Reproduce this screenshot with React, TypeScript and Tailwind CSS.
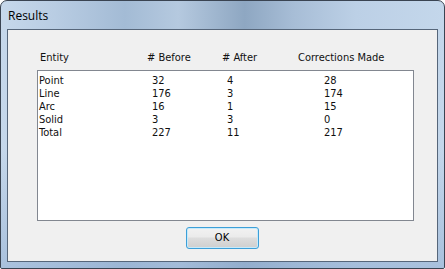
import React from "react";

const rows = [
  ["Point", "32", "4", "28"],
  ["Line", "176", "3", "174"],
  ["Arc", "16", "1", "15"],
  ["Solid", "3", "3", "0"],
  ["Total", "227", "11", "217"],
];

const font = { fontFamily: "'DejaVu Sans Condensed', 'DejaVu Sans', sans-serif", fontSize: "11px" };

export default function App() {
  return (
    <div className="w-[445px] h-[269px] bg-white">
      <div className="relative w-[445px] h-[269px] rounded-t-[7px] rounded-b-[2px] border border-[#3a4452] flex flex-col px-[6px] pb-[6px] bg-[linear-gradient(90deg,#c6d8eb_0%,#b9cde3_12%,#a3bbd5_28%,#b5c9df_40%,#8ea7c2_55%,#a7bdd6_66%,#bcd0e6_80%,#c4d7eb_100%)]">
        <div className="pointer-events-none absolute inset-x-0 bottom-0 h-[120px] bg-[linear-gradient(180deg,rgba(160,185,215,0)_0%,rgba(150,178,212,0.6)_100%)]" />
        <div
          className="relative h-[28px] flex items-center pl-[1px] pt-[1px] text-[12px] text-black"
          style={{ fontFamily: "'Segoe UI', 'Open Sans', sans-serif" }}
        >
          Results
        </div>
        <div className="relative flex-1 border border-[#56667a] bg-[#f0f0f0] flex flex-col text-[#101010]" style={font}>
          <div className="grid grid-cols-[107px_75px_76px_auto] pl-[32px] pt-[21px] h-[40px] leading-[13px]">
            <span>Entity</span>
            <span># Before</span>
            <span># After</span>
            <span>Corrections Made</span>
          </div>
          <div className="ml-[29px] w-[377px] h-[151px] border border-[#828790] bg-white pt-[3px] pl-[1px] flex flex-col">
            {rows.map((r) => (
              <div key={r[0]} className="grid grid-cols-[113px_75px_97px_auto] h-[13px] leading-[13px]">
                <span>{r[0]}</span>
                <span>{r[1]}</span>
                <span>{r[2]}</span>
                <span>{r[3]}</span>
              </div>
            ))}
          </div>
          <div className="flex justify-center pt-[6px] pr-[1px]">
            <button className="w-[73px] h-[22px] rounded-[3px] border border-[#3c9fd8] bg-[linear-gradient(180deg,#f2f2f2_0%,#ebebeb_45%,#dddddd_50%,#cfcfcf_100%)] shadow-[inset_0_0_0_1px_#c6eafb] text-black flex items-center justify-center">
              OK
            </button>
          </div>
        </div>
      </div>
    </div>
  );
}
